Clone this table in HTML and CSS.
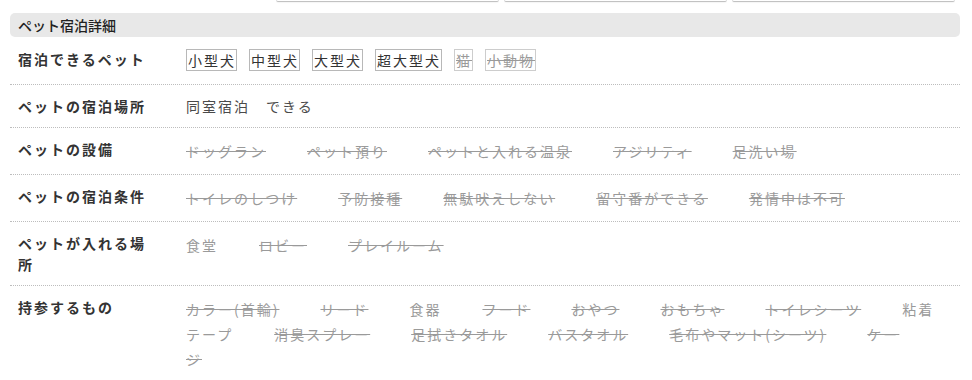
FILE: index.html
```html
<!DOCTYPE html>
<html lang="ja">
<head>
<meta charset="utf-8">
<title>ペット宿泊詳細</title>
<link rel="stylesheet" href="styles.css">
</head>
<body>
<div class="thumbs">
  <div class="thumb"></div>
  <div class="thumb"></div>
  <div class="thumb"></div>
</div>
<section class="pet">
  <h2 class="pet-title">ペット宿泊詳細</h2>
  <dl class="pet-list">
    <div class="pet-row pet-row--tags">
      <dt class="pet-label">宿泊できるペット</dt>
      <dd class="pet-value pet-value--tags">
        <span class="tag">小型犬</span>
        <span class="tag">中型犬</span>
        <span class="tag">大型犬</span>
        <span class="tag">超大型犬</span>
        <span class="tag tag--off">猫</span>
        <span class="tag tag--off">小動物</span>
      </dd>
    </div>
    <div class="pet-row">
      <dt class="pet-label">ペットの宿泊場所</dt>
      <dd class="pet-value pet-value--plain">同室宿泊　できる</dd>
    </div>
    <div class="pet-row">
      <dt class="pet-label">ペットの設備</dt>
      <dd class="pet-value"><span class="item item--off">ドッグラン</span><span class="item item--off">ペット預り</span><span class="item item--off">ペットと入れる温泉</span><span class="item item--off">アジリティ</span><span class="item item--off">足洗い場</span></dd>
    </div>
    <div class="pet-row">
      <dt class="pet-label">ペットの宿泊条件</dt>
      <dd class="pet-value"><span class="item item--off">トイレのしつけ</span><span class="item item--off">予防接種</span><span class="item item--off">無駄吠えしない</span><span class="item item--off">留守番ができる</span><span class="item item--off">発情中は不可</span></dd>
    </div>
    <div class="pet-row">
      <dt class="pet-label">ペットが入れる場所</dt>
      <dd class="pet-value"><span class="item">食堂</span><span class="item item--off">ロビー</span><span class="item item--off">プレイルーム</span></dd>
    </div>
    <div class="pet-row">
      <dt class="pet-label">持参するもの</dt>
      <dd class="pet-value"><span class="item item--off">カラー(首輪)</span><span class="item item--off">リード</span><span class="item">食器</span><span class="item item--off">フード</span><span class="item item--off">おやつ</span><span class="item item--off">おもちゃ</span><span class="item item--off">トイレシーツ</span><span class="item">粘着テープ</span><span class="item item--off">消臭スプレー</span><span class="item item--off">足拭きタオル</span><span class="item item--off">バスタオル</span><span class="item item--off">毛布やマット(シーツ)</span><span class="item item--off">ケージ</span></dd>
    </div>
  </dl>
</section>
</body>
</html>
```

FILE: styles.css
```css
body {
  margin: 0;
  background: #fff;
  color: #333;
  font-family: "Noto Sans CJK JP", "Noto Sans", sans-serif;
  font-size: 14px;
}

.thumbs {
  display: flex;
  justify-content: flex-end;
  gap: 5px;
  height: 3px;
  padding-right: 17px;
}

.thumb {
  width: 223px;
  height: 2px;
  box-sizing: border-box;
  border: 1px solid #dcdcdc;
  border-top: none;
  border-bottom-color: #c2c2c2;
  border-radius: 0 0 3px 3px;
  box-shadow: 0 1px 1px rgba(0, 0, 0, 0.04);
}

.pet {
  margin: 10px 12px 0 10px;
}

.pet-title {
  margin: 0 0 1px;
  height: 24px;
  padding-left: 8px;
  background: #e8e8e8;
  border-radius: 5px;
  font-size: 14px;
  font-weight: 500;
  line-height: 24px;
  color: #222;
}

.pet-list {
  margin: 0;
}

.pet-row {
  display: flex;
  align-items: flex-start;
  padding: 11px 16px 10px 0;
  border-bottom: 1px dotted #bdbdbd;
}

.pet-row--tags {
  padding-bottom: 13px;
}

.pet-label {
  flex: none;
  width: 176px;
  box-sizing: border-box;
  margin: 0;
  padding: 0 36px 0 8px;
  font-size: 14px;
  font-weight: 700;
  line-height: 21px;
  letter-spacing: 2px;
  color: #333;
}

.pet-value {
  flex: 1;
  margin: 0;
  font-size: 14px;
  line-height: 25px;
  letter-spacing: 2px;
  color: #9a9a9a;
}

.pet-value--plain {
  line-height: 21px;
  color: #4a4a4a;
}

.pet-value--tags {
  display: flex;
  gap: 12px;
}

.tag {
  display: block;
  padding: 0 0 0 1px;
  border: 1px solid #b8b8b8;
  line-height: 20px;
  color: #333;
}

.tag--off {
  border-color: #cdcdcd;
  color: #9a9a9a;
  text-decoration: line-through;
}

.item {
  margin-right: 41px;
}

.item--off {
  text-decoration: line-through;
}
```
